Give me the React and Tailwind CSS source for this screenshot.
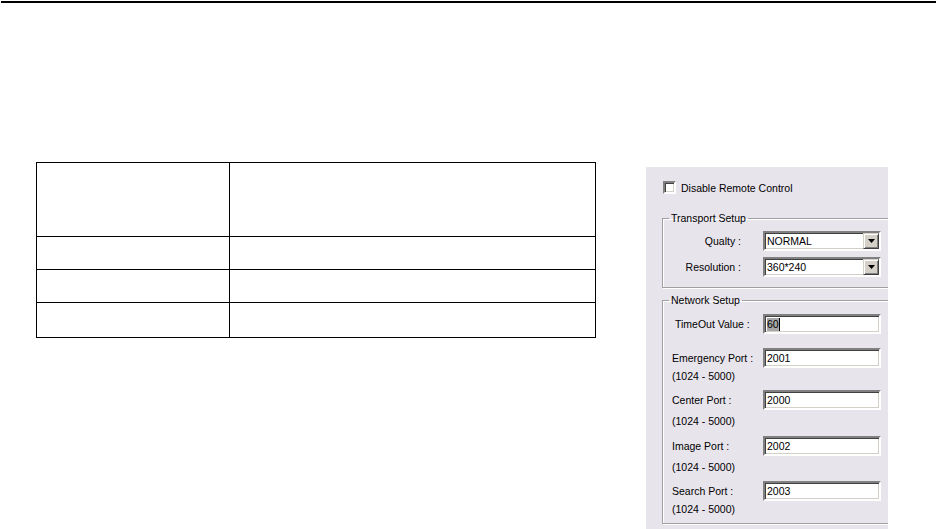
import React from 'react';

const font = { fontFamily: '"Liberation Sans", Arial, sans-serif' };

const sunken = 'bg-white border-2 border-t-[#808080] border-l-[#808080] border-r-white border-b-white shadow-[inset_1px_1px_0_#404040,inset_-1px_-1px_0_#d4d0c8]';

const Combo = ({ value }) => (
    <div className={`w-[118px] h-[20px] flex items-center justify-between ${sunken}`}>
        <span className="pl-[2px] text-[10.5px] leading-[12px]">{value}</span>
        <div className="w-[16px] h-[16px] mr-[0px] bg-[#d4d0c8] border border-t-[#d4d0c8] border-l-[#d4d0c8] border-r-[#404040] border-b-[#404040] shadow-[inset_1px_1px_0_#fff,inset_-1px_-1px_0_#808080] flex items-center justify-center">
            <svg width="7" height="4" viewBox="0 0 7 4"><path d="M0 0h7L3.5 4z" fill="#000" /></svg>
        </div>
    </div>
);

const Input = ({ value, selected }) => (
    <div className={`w-[118px] h-[20px] flex items-center ${sunken}`}>
        {selected ? (
            <span className="ml-[2px] flex items-center">
                <span className="bg-[#a6a6a6] text-[10.5px] leading-[13px] px-[0px]">{value}</span>
                <span className="w-[1px] h-[13px] bg-black" />
            </span>
        ) : (
            <span className="pl-[2px] text-[10.5px] leading-[12px]">{value}</span>
        )}
    </div>
);

const Field = ({ label, value, pad, selected }) => (
    <div className="flex items-center h-[20px]">
        <div className="w-[100px] text-[10.5px] leading-[12px]" style={{ paddingLeft: pad }}>{label}</div>
        <Input value={value} selected={selected} />
    </div>
);

const Range = ({ className }) => (
    <div className={`pl-[9px] text-[10.5px] leading-[12px] ${className}`}>(1024 - 5000)</div>
);

const Group = ({ title, className, children }) => (
    <fieldset className={`w-[240px] border border-[#a0a0a0] shadow-[inset_1px_1px_0_#fff,1px_1px_0_#fff] ${className}`}>
        <legend className="ml-[6px] px-[2px] text-[10.5px] leading-[12px]">{title}</legend>
        {children}
    </fieldset>
);

const SettingsPanel = () => (
    <div className="w-[242px] h-[362px] bg-[#e8e4ec] overflow-hidden pt-[14px] pl-[16px] flex flex-col text-black" style={font}>
        <div className="flex items-center h-[13px] ml-[1px]">
            <div className={`w-[13px] h-[13px] ${sunken}`} />
            <span className="ml-[5px] text-[10.5px] leading-[12px]">Disable Remote Control</span>
        </div>

        <Group title="Transport Setup" className="mt-[18px] pt-[7px] pb-[10px]">
            <div className="flex items-center">
                <div className="w-[78px] text-right text-[10.5px] leading-[12px]">Qualty :</div>
                <div className="ml-[22px]"><Combo value="NORMAL" /></div>
            </div>
            <div className="flex items-center mt-[6px]">
                <div className="w-[78px] text-right text-[10.5px] leading-[12px]">Resolution :</div>
                <div className="ml-[22px]"><Combo value="360*240" /></div>
            </div>
        </Group>

        <Group title="Network Setup" className="mt-[6px] pt-[8px] pb-[8px]">
            <Field label="TimeOut Value :" value="60" pad={12} selected />

            <div className="mt-[14px]">
                <Field label="Emergency Port :" value="2001" pad={9} />
                <Range className="mt-[2px]" />
            </div>
            <div className="mt-[8px]">
                <Field label="Center Port :" value="2000" pad={9} />
                <Range className="mt-[5px]" />
            </div>
            <div className="mt-[9px]">
                <Field label="Image Port :" value="2002" pad={9} />
                <Range className="mt-[5px]" />
            </div>
            <div className="mt-[8px]">
                <Field label="Search Port :" value="2003" pad={9} />
                <Range className="mt-[2px]" />
            </div>
        </Group>
    </div>
);

const rows = [74, 33, 33, 34];

const BlankTable = () => (
    <div className="w-[560px] border border-black">
        {rows.map((h, i) => (
            <div key={i} className={`flex ${i < rows.length - 1 ? 'border-b border-black' : ''}`} style={{ height: h }}>
                <div className="w-[193px] border-r border-black" />
                <div className="flex-1" />
            </div>
        ))}
    </div>
);

export default function App() {
    return (
        <div className="w-[938px] h-[529px] bg-white overflow-hidden">
            <div className="mt-[1px] ml-[1px] w-[935px] h-[2px] bg-black" />
            <div className="flex items-start">
                <div className="ml-[36px] mt-[159px]">
                    <BlankTable />
                </div>
                <div className="ml-[50px] mt-[164px]">
                    <SettingsPanel />
                </div>
            </div>
        </div>
    );
}
